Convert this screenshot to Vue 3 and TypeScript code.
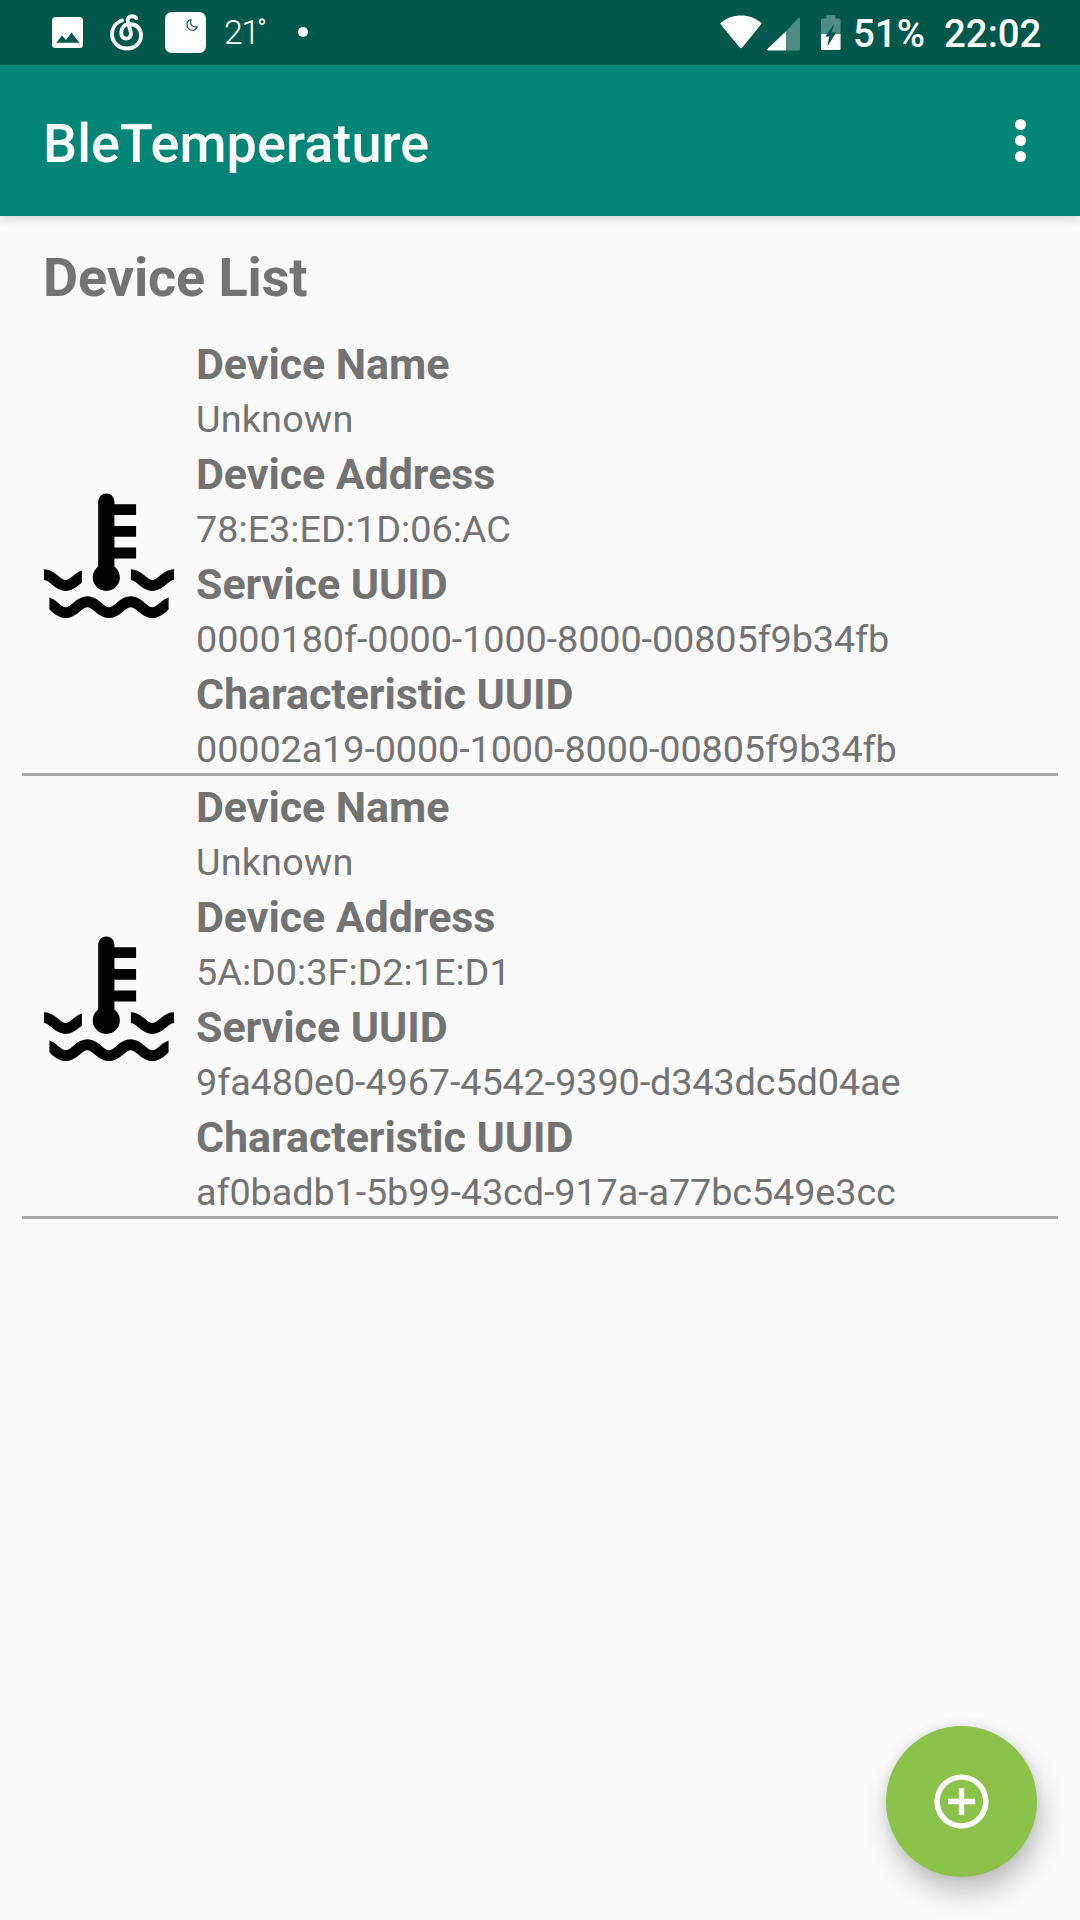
<script setup lang="ts">
interface Device {
  name: string
  address: string
  service: string
  characteristic: string
}

const devices: Device[] = [
  {
    name: 'Unknown',
    address: '78:E3:ED:1D:06:AC',
    service: '0000180f-0000-1000-8000-00805f9b34fb',
    characteristic: '00002a19-0000-1000-8000-00805f9b34fb',
  },
  {
    name: 'Unknown',
    address: '5A:D0:3F:D2:1E:D1',
    service: '9fa480e0-4967-4542-9390-d343dc5d04ae',
    characteristic: 'af0badb1-5b99-43cd-917a-a77bc549e3cc',
  },
]
</script>

<template>
  <div class="screen">
    <header class="status">
      <svg class="photo" width="32" height="32" viewBox="0 0 32 32">
        <rect x="0" y="0" width="31" height="31" rx="3.5" fill="#fff" />
        <path d="M4.300 25.700L10 18.500L14 23L19.500 15.500L27.500 25.700Z" fill="#00574b" />
      </svg>
      <svg class="music" width="34" height="38" viewBox="0 0 34 38" fill="none" stroke="#fff" stroke-width="3.900" stroke-linecap="round">
        <path d="M12 6.500C5.500 8.700 2 14.500 2 20.500C2.300 28.500 8.800 34.600 17 34.500C25 34.400 31 29 31 21.500C31 14.500 26.500 10 19.500 10C14 10.300 11.200 14.500 11.200 18.800C11.200 22.300 13.300 24.600 16.200 24.600C19.500 24.600 21.500 22 20.900 18.600L17.900 7.500C17.200 4 19.500 2.300 22.200 2.300C23.900 2.300 25.300 3.100 26.300 4.100" />
      </svg>
      <svg class="weather" width="41" height="41" viewBox="0 0 41 41">
        <rect width="41" height="41" rx="6.500" fill="#fff" />
        <path d="M26 7.300C21.800 8.300 20.900 13 23 16C25.300 19.400 30.300 19.100 32.300 14.800C27.700 15.700 24.400 12.500 26 7.300Z" fill="none" stroke="#00574b" stroke-width="1.100" stroke-linejoin="round" />
      </svg>
      <span class="degrees">21<span class="ring">°</span></span>
      <span class="more-dot"></span>
      <span class="spacer"></span>
      <svg class="wifi" width="42" height="34" viewBox="0 0 42 34">
        <path d="M1 7.500C12 -2 30 -2 41 7.500Q41.900 8.400 41.200 9.300L22.300 32.400Q21 34 19.700 32.400L0.600 9.300Q-0.100 8.400 1 7.500Z" fill="#fff" />
      </svg>
      <svg class="signal" width="34" height="34" viewBox="0 0 34 34">
        <path d="M19 14.200L31 1.200Q33 -0.500 33 2V32Q33 33.500 31.500 33.500H19Z" fill="#4f8c83" />
        <path d="M19 14.200V33.500H1.500Q-0.600 33.300 0.700 31.800Z" fill="#fff" />
      </svg>
      <svg class="battery" width="20" height="36" viewBox="0 0 20 36">
        <path d="M5.300 0H14.300V3.500H18Q19.600 3.500 19.600 5V19H0V5Q0 3.500 1.600 3.500H5.300Z" fill="#4f8c83" />
        <path d="M0 19H19.600V33.500Q19.600 35 18 35H1.600Q0 35 0 33.500Z" fill="#fff" />
        <path d="M13 9L4.300 21.500H8.300L6.300 31.500L15.300 17.500H10.800Z" fill="#00574b" />
      </svg>
      <span class="percent">51%</span>
      <span class="clock">22:02</span>
    </header>

    <div class="toolbar">
      <h1>BleTemperature</h1>
      <button class="menu" aria-label="More options">
        <i></i><i></i><i></i>
      </button>
    </div>

    <main>
      <h2>Device List</h2>
      <ul>
        <li v-for="device in devices" :key="device.address">
          <svg class="thermo" width="130" height="130" viewBox="0 0 24 24">
            <defs>
              <clipPath id="surface"><path d="M0 14H7V20H0ZM16 14H24V20H16Z" /></clipPath>
              <clipPath id="depth"><path d="M1 19H23V24H1Z" /></clipPath>
            </defs>
            <path d="M10 2.500A1.500 1.500 0 0 1 13 2.500V3H17V5H13V7H17V9H13V11H17V13H13V14.500A2.500 2.500 0 1 1 10 14.500Z" />
            <path clip-path="url(#surface)" class="wave" d="M-.2 16H0C1.800 16 2.200 18 4 18S6.200 16 8 16M16 16C17.800 16 18.200 18 20 18S22.200 16 24 16h.2" />
            <path clip-path="url(#depth)" class="wave" d="M0 21C1.800 21 2.200 23 4 23S6.200 21 8 21S10.200 23 12 23S14.200 21 16 21S18.200 23 20 23S22.200 21 24 21" />
          </svg>
          <dl>
            <dt>Device Name</dt>
            <dd class="name">{{ device.name }}</dd>
            <dt>Device Address</dt>
            <dd>{{ device.address }}</dd>
            <dt>Service UUID</dt>
            <dd class="uuid">{{ device.service }}</dd>
            <dt>Characteristic UUID</dt>
            <dd class="uuid">{{ device.characteristic }}</dd>
          </dl>
        </li>
      </ul>
    </main>

    <button class="fab" aria-label="Add device">
      <svg width="65" height="65" viewBox="0 0 24 24">
        <path fill="#fff" d="M13 7h-2v4H7v2h4v4h2v-4h4v-2h-4V7zm-1-5C6.480 2 2 6.480 2 12s4.480 10 10 10 10-4.480 10-10S17.520 2 12 2zm0 18c-4.410 0-8-3.590-8-8s3.590-8 8-8 8 3.590 8 8-3.590 8-8 8z" />
      </svg>
    </button>
  </div>
</template>

<style>
body {
  margin: 0;
}
</style>

<style scoped>
.screen {
  position: relative;
  width: 1080px;
  height: 1920px;
  overflow: hidden;
  display: flex;
  flex-direction: column;
  background: #fafafa;
  color: #737373;
  font-family: Roboto, sans-serif;
}
.status {
  position: relative;
  z-index: 1;
  height: 65px;
  flex: none;
  display: flex;
  align-items: flex-start;
  box-sizing: border-box;
  padding-left: 52px;
  background: #00574b;
  color: #fff;
}
.status svg {
  flex: none;
  display: block;
}
.photo {
  margin-top: 17px;
}
.music {
  margin: 14px 0 0 26px;
}
.weather {
  margin: 12px 0 0 21px;
}
.degrees {
  display: flex;
  width: 40px;
  margin: 12px 0 0 18px;
  font-size: 34px;
  line-height: 40px;
  font-weight: 300;
  letter-spacing: -1.500px;
  white-space: nowrap;
}
.ring {
  margin-left: -1.500px;
  font-size: 25px;
  line-height: 33px;
  font-weight: 400;
}
.more-dot {
  width: 10px;
  height: 10px;
  margin: 27px 0 0 34px;
  border-radius: 50%;
  background: #fff;
}
.spacer {
  flex: 1;
}
.wifi {
  margin-top: 15px;
}
.signal {
  margin: 16.500px 0 0 5px;
}
.battery {
  margin: 15px 0 0 20px;
}
.percent,
.clock {
  flex: none;
  margin-top: 12px;
  font-size: 38.400px;
  line-height: 44px;
  font-weight: 500;
}
.percent {
  width: 91px;
  margin-left: 12px;
}
.clock {
  width: 136px;
}
.toolbar {
  height: 151px;
  flex: none;
  display: flex;
  align-items: center;
  justify-content: space-between;
  box-sizing: border-box;
  padding: 0 54px 0 43px;
  background: #008577;
  box-shadow: 0 2px 10px rgba(0, 0, 0, 0.18);
}
h1 {
  margin: 6px 0 0;
  color: #fff;
  font-size: 54px;
  line-height: 64px;
  font-weight: 500;
  letter-spacing: 0.070px;
}
.menu {
  display: flex;
  flex-direction: column;
  gap: 5.200px;
  padding: 0;
  border: 0;
  background: none;
}
.menu i {
  width: 11px;
  height: 11px;
  border-radius: 50%;
  background: #fff;
}
main {
  padding: 0 22px;
}
h2 {
  height: 117px;
  margin: 0;
  padding: 30px 21px 0;
  box-sizing: border-box;
  font-size: 54px;
  line-height: 63px;
  font-weight: 700;
  letter-spacing: -0.120px;
}
ul {
  margin: 0;
  padding: 0;
  list-style: none;
}
li {
  display: flex;
  align-items: center;
  gap: 22px;
  padding-left: 22px;
  border-bottom: 3px solid #aaa;
}
.thermo {
  flex: none;
}
.wave {
  fill: none;
  stroke: #000;
  stroke-width: 2;
}
dl,
dd {
  margin: 0;
}
dt {
  font-size: 43px;
  line-height: 62px;
  font-weight: 700;
  letter-spacing: -0.080px;
}
dd {
  font-size: 37.800px;
  line-height: 48px;
}
.name {
  letter-spacing: 0.180px;
}
.uuid {
  letter-spacing: -0.110px;
}
.fab {
  position: absolute;
  right: 43px;
  bottom: 43px;
  width: 151px;
  height: 151px;
  display: flex;
  align-items: center;
  justify-content: center;
  padding: 0;
  border: 0;
  border-radius: 50%;
  background: #8bc34a;
  box-shadow: 4px 16px 26px rgba(0, 0, 0, 0.22), 0 0 12px rgba(0, 0, 0, 0.1);
}
</style>
